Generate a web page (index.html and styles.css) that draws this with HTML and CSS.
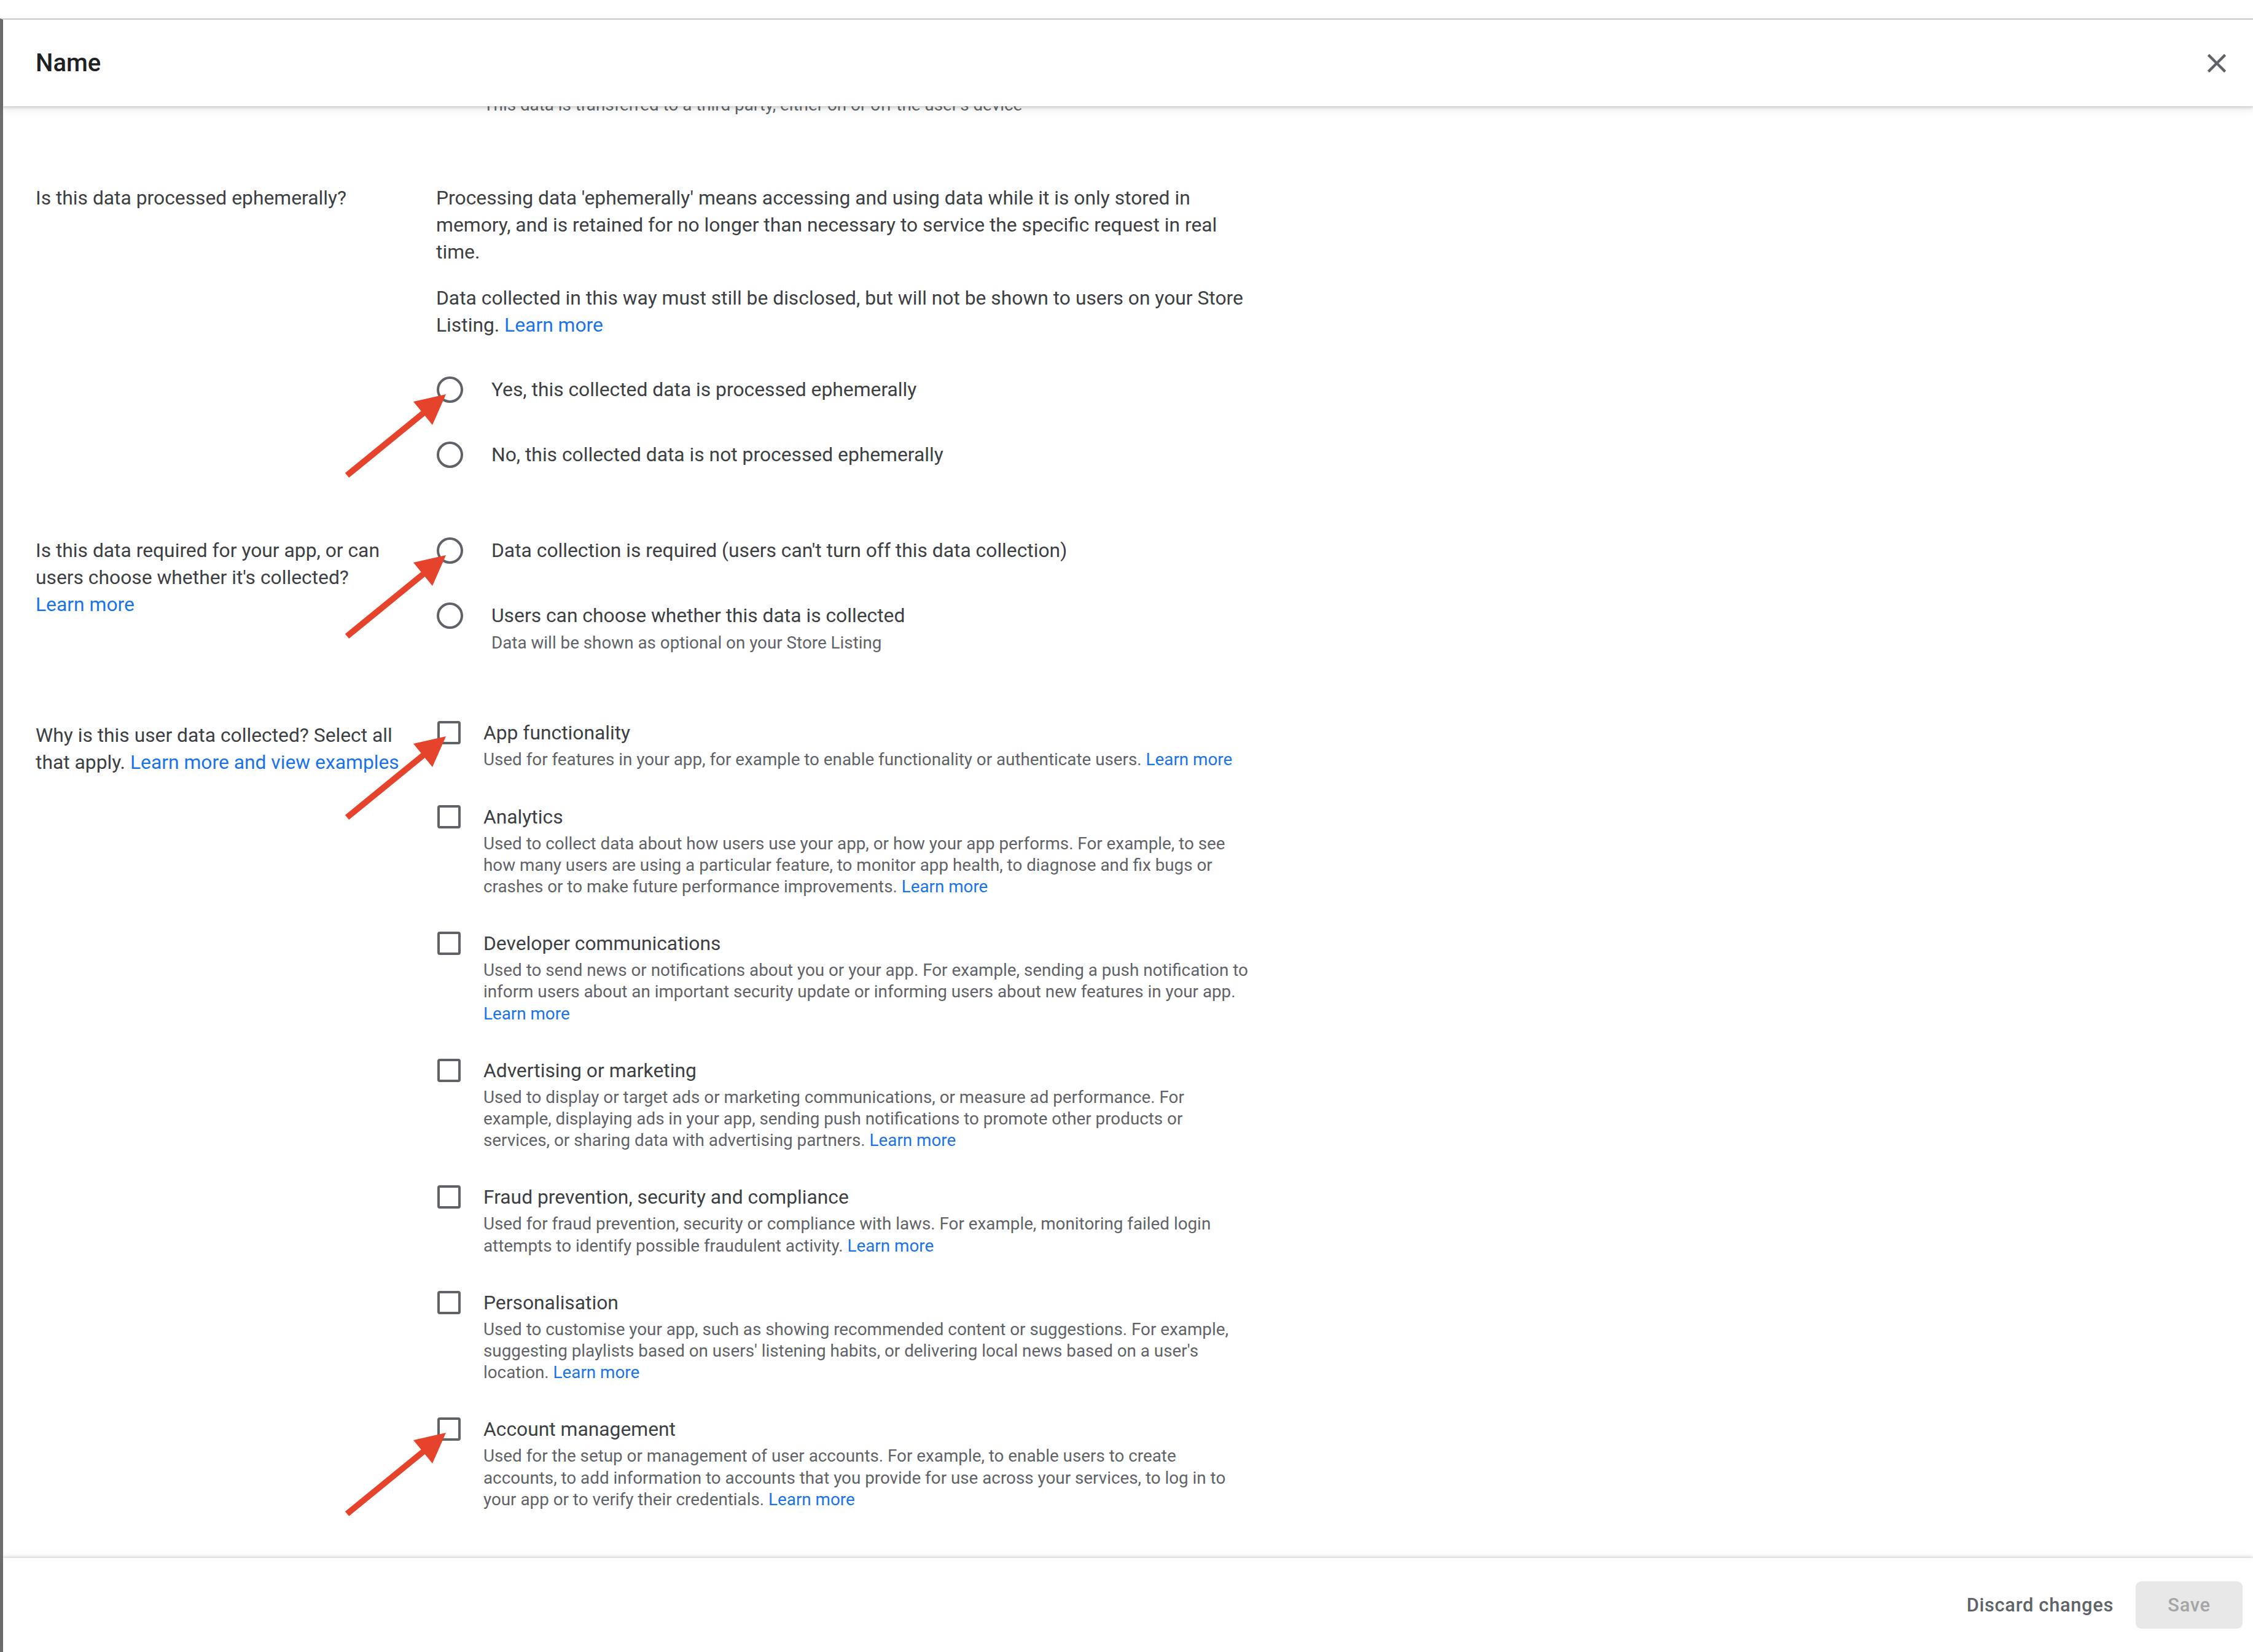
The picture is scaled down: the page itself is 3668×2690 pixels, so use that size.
FILE: index.html
```html
<!DOCTYPE html>
<html>
<head>
    <title>Name - Data safety</title>
    <link rel="stylesheet" href="styles.css">
</head>
<body>
    <div class="page">
        <div class="dialog">
            <header class="dialog-header">
                <h1 class="dialog-title">Name</h1>
                <button class="close-btn" aria-label="Close">
                    <svg viewBox="0 0 24 24"><path d="M19 6.41L17.59 5 12 10.59 6.41 5 5 6.41 10.59 12 5 17.59 6.41 19 12 13.41 17.59 19 19 17.59 13.41 12z"/></svg>
                </button>
            </header>

            <div class="dialog-body">
                <div class="scroll">
                    <!-- tail of the previous question, scrolled under the header -->
                    <div class="section section-cut">
                        <div></div>
                        <div class="field">
                            <p class="check-desc hint-cut">This data is transferred to a third party, either on or off the user's device</p>
                        </div>
                    </div>

                    <div class="section">
                        <div class="question">Is this data processed ephemerally?</div>
                        <div class="field">
                            <p class="para">Processing data 'ephemerally' means accessing and using data while it is only stored in memory, and is retained for no longer than necessary to service the specific request in real time.</p>
                            <p class="para">Data collected in this way must still be disclosed, but will not be shown to users on your Store Listing. <a href="#">Learn more</a></p>
                            <div class="radio-group">
                                <label class="radio-option">
                                    <span class="radio"></span>
                                    <span class="radio-label">Yes, this collected data is processed ephemerally</span>
                                    <svg class="arrow" viewBox="0 0 180 150"><line x1="11" y1="138" x2="136" y2="36" /><polygon points="172,6 119,18 150,56" /></svg>
                                </label>
                                <label class="radio-option">
                                    <span class="radio"></span>
                                    <span class="radio-label">No, this collected data is not processed ephemerally</span>
                                </label>
                            </div>
                        </div>
                    </div>

                    <div class="section">
                        <div class="question">
                            Is this data required for your app, or can users choose whether it's collected?
                            <a class="block-link" href="#">Learn more</a>
                        </div>
                        <div class="field">
                            <div class="radio-group radio-group-top">
                                <label class="radio-option">
                                    <span class="radio"></span>
                                    <span class="radio-label">Data collection is required (users can't turn off this data collection)</span>
                                    <svg class="arrow" viewBox="0 0 180 150"><line x1="11" y1="138" x2="136" y2="36" /><polygon points="172,6 119,18 150,56" /></svg>
                                </label>
                                <label class="radio-option">
                                    <span class="radio"></span>
                                    <span>
                                        <span class="radio-label">Users can choose whether this data is collected</span>
                                        <span class="radio-sub">Data will be shown as optional on your Store Listing</span>
                                    </span>
                                </label>
                            </div>
                        </div>
                    </div>

                    <div class="section section-reasons">
                        <div class="question question-pad">Why is this user data collected? Select all that apply. <a href="#">Learn more and view examples</a></div>
                        <div class="field">
                            <div class="check-list">
                                <label class="check-item">
                                    <span class="checkbox"></span>
                                    <span>
                                        <span class="check-title">App functionality</span>
                                        <span class="check-desc">Used for features in your app, for example to enable functionality or authenticate users. <a href="#">Learn more</a></span>
                                    </span>
                                    <svg class="arrow arrow-check" viewBox="0 0 180 150"><line x1="11" y1="138" x2="136" y2="36" /><polygon points="172,6 119,18 150,56" /></svg>
                                </label>
                                <label class="check-item">
                                    <span class="checkbox"></span>
                                    <span>
                                        <span class="check-title">Analytics</span>
                                        <span class="check-desc">Used to collect data about how users use your app, or how your app performs. For example, to see how many users are using a particular feature, to monitor app health, to diagnose and fix bugs or crashes or to make future performance improvements. <a href="#">Learn more</a></span>
                                    </span>
                                </label>
                                <label class="check-item">
                                    <span class="checkbox"></span>
                                    <span>
                                        <span class="check-title">Developer communications</span>
                                        <span class="check-desc">Used to send news or notifications about you or your app. For example, sending a push notification to inform users about an important security update or informing users about new features in your app. <a href="#">Learn more</a></span>
                                    </span>
                                </label>
                                <label class="check-item">
                                    <span class="checkbox"></span>
                                    <span>
                                        <span class="check-title">Advertising or marketing</span>
                                        <span class="check-desc">Used to display or target ads or marketing communications, or measure ad performance. For example, displaying ads in your app, sending push notifications to promote other products or services, or sharing data with advertising partners. <a href="#">Learn more</a></span>
                                    </span>
                                </label>
                                <label class="check-item">
                                    <span class="checkbox"></span>
                                    <span>
                                        <span class="check-title">Fraud prevention, security and compliance</span>
                                        <span class="check-desc">Used for fraud prevention, security or compliance with laws. For example, monitoring failed login attempts to identify possible fraudulent activity. <a href="#">Learn more</a></span>
                                    </span>
                                </label>
                                <label class="check-item">
                                    <span class="checkbox"></span>
                                    <span>
                                        <span class="check-title">Personalisation</span>
                                        <span class="check-desc">Used to customise your app, such as showing recommended content or suggestions. For example, suggesting playlists based on users' listening habits, or delivering local news based on a user's location. <a href="#">Learn more</a></span>
                                    </span>
                                </label>
                                <label class="check-item">
                                    <span class="checkbox"></span>
                                    <span>
                                        <span class="check-title">Account management</span>
                                        <span class="check-desc">Used for the setup or management of user accounts. For example, to enable users to create accounts, to add information to accounts that you provide for use across your services, to log in to your app or to verify their credentials. <a href="#">Learn more</a></span>
                                    </span>
                                    <svg class="arrow arrow-check" viewBox="0 0 180 150"><line x1="11" y1="138" x2="136" y2="36" /><polygon points="172,6 119,18 150,56" /></svg>
                                </label>
                            </div>
                        </div>
                    </div>
                </div>
            </div>

            <footer class="dialog-footer">
                <button class="btn btn-text">Discard changes</button>
                <button class="btn btn-save" disabled>Save</button>
            </footer>
        </div>
    </div>
</body>
</html>
```

FILE: styles.css
```css
* {
    box-sizing: border-box;
}

body {
    margin: 0;
    font-family: Roboto, "Liberation Sans", Arial, sans-serif;
    color: #3c4043;
    background: #fff;
}

a {
    color: #1a73e8;
    text-decoration: none;
    white-space: nowrap;
}

p {
    margin: 0;
}

.page {
    height: 2690px;
    padding-top: 30px;
    overflow: hidden;
}

.dialog {
    height: 100%;
    display: flex;
    flex-direction: column;
    border-top: 2px solid #cfcfcf;
    border-left: 5px solid #6e6e6e;
    background: #fff;
}

/* header */
.dialog-header {
    flex: none;
    height: 141px;
    display: flex;
    align-items: center;
    justify-content: space-between;
    padding: 0 33px 0 53px;
    background: #fff;
    position: relative;
    z-index: 2;
    box-shadow: 0 2px 4px rgba(60, 64, 67, 0.22), 0 4px 12px 2px rgba(60, 64, 67, 0.1);
}

.dialog-title {
    margin: 0;
    font-size: 40px;
    font-weight: 500;
    color: #202124;
}

.close-btn {
    width: 52px;
    height: 52px;
    padding: 0;
    border: 0;
    background: none;
    display: flex;
    align-items: center;
    justify-content: center;
}

.close-btn svg {
    width: 52px;
    height: 52px;
    fill: #5f6368;
}

/* body */
.dialog-body {
    flex: 1;
    overflow: hidden;
    padding-left: 53px;
}

.scroll {
    margin-top: -20px;
}

.section {
    display: grid;
    grid-template-columns: 600px 1326px;
    column-gap: 52px;
    margin-top: 112px;
}

.section-cut {
    margin-top: 0;
}

.section-reasons {
    margin-top: 107px;
}

.question {
    font-size: 31.8px;
    line-height: 44px;
    color: #3c4043;
}

.question-pad {
    padding-top: 4px;
}

.block-link {
    display: block;
}

.para {
    font-size: 31.8px;
    line-height: 44px;
}

.para + .para {
    margin-top: 31px;
}

/* radio buttons */
.radio-group {
    display: flex;
    flex-direction: column;
    gap: 62px;
    margin-top: 61px;
}

.radio-group-top {
    margin-top: 0;
}

.radio-option {
    position: relative;
    display: grid;
    grid-template-columns: 90px 1fr;
    align-items: start;
}

.radio {
    width: 43px;
    height: 43px;
    margin: 0.5px 0 0 1px;
    border: 4.4px solid #5f6368;
    border-radius: 50%;
}

.radio-label {
    display: block;
    font-size: 31.8px;
    line-height: 44px;
}

.radio-sub {
    display: block;
    margin-top: 5px;
    font-size: 27.8px;
    line-height: 35.2px;
    color: #5f6368;
}

/* checkboxes */
.check-list {
    display: flex;
    flex-direction: column;
    gap: 53px;
}

.check-item {
    position: relative;
    display: grid;
    grid-template-columns: 77px 1fr;
    align-items: start;
}

.checkbox {
    width: 38px;
    height: 38px;
    margin: 3px 0 0 2px;
    border: 4.4px solid #5f6368;
    border-radius: 4px;
}

.check-title {
    display: block;
    font-size: 31.8px;
    line-height: 44px;
}

.check-desc {
    display: block;
    margin-top: 4px;
    font-size: 27.8px;
    line-height: 35.2px;
    color: #5f6368;
}

.hint-cut {
    margin-top: 0;
    padding-left: 77px;
}

/* red annotation arrows */
.arrow {
    position: absolute;
    left: -156px;
    top: 24px;
    width: 180px;
    height: 150px;
    pointer-events: none;
}

.arrow-check {
    top: 22px;
}

.arrow line {
    stroke: #e5432b;
    stroke-width: 10;
}

.arrow polygon {
    fill: #e5432b;
}

/* footer */
.dialog-footer {
    flex: none;
    height: 153px;
    display: flex;
    align-items: center;
    justify-content: flex-end;
    gap: 18px;
    padding-right: 17px;
    background: #fff;
    position: relative;
    z-index: 2;
    box-shadow: 0 -2px 4px rgba(60, 64, 67, 0.15), 0 -3px 10px rgba(60, 64, 67, 0.08);
}

.btn {
    height: 77px;
    padding: 0 18px;
    border: 0;
    border-radius: 9px;
    background: none;
    font-family: inherit;
    font-size: 30.8px;
    font-weight: 500;
    letter-spacing: 0.7px;
}

.btn-text {
    color: #5f6368;
}

.btn-save {
    width: 174px;
    background: #e8e8e8;
    color: #a5a5a5;
}
```
